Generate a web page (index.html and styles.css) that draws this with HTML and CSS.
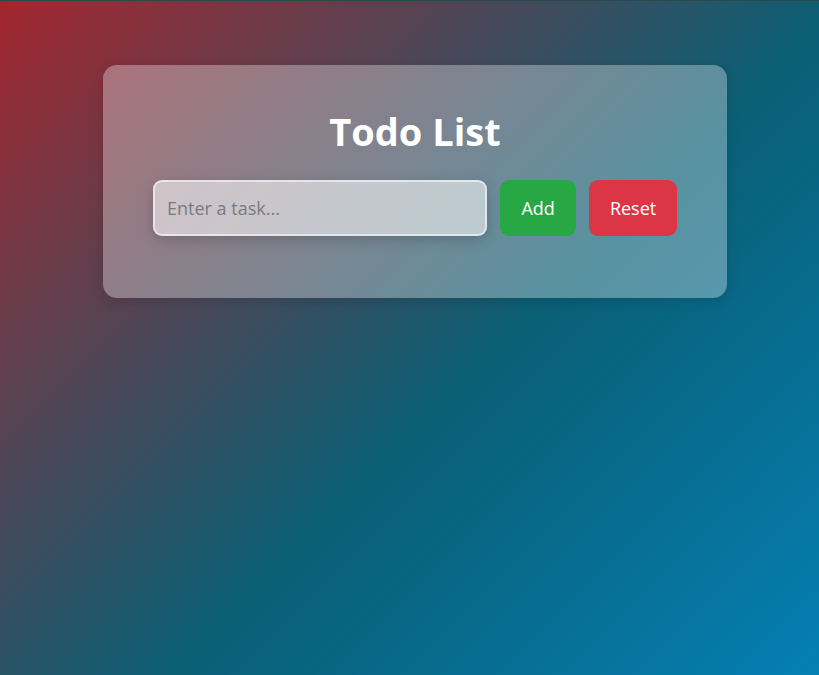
FILE: index.html
```html
<!DOCTYPE html>
<html lang="en">
<head>
<meta charset="utf-8">
<title>Todo List</title>
<link rel="stylesheet" href="styles.css">
</head>
<body>
<div class="topline"></div>
<main class="card">
  <h1 class="title">Todo List</h1>
  <div class="row">
    <input class="task-input" type="text" placeholder="Enter a task...">
    <button class="btn btn-add">Add</button>
    <button class="btn btn-reset">Reset</button>
  </div>
</main>
</body>
</html>
```

FILE: styles.css
```css
html, body {
  margin: 0;
  padding: 0;
  height: 100%;
}
body {
  font-family: "Open Sans", "Noto Sans", sans-serif;
  background: linear-gradient(135deg, #a3262f 0%, #0a5f75 57%, #047fb3 100%);
  overflow: hidden;
}
.topline {
  height: 1px;
  background: #294a4c;
}
.card {
  box-sizing: border-box;
  width: 624px;
  height: 233px;
  margin: 64px 0 0 103px;
  padding: 0 50px;
  border-radius: 14px;
  background: rgba(255, 255, 255, 0.32);
  box-shadow: 0 4px 12px rgba(0, 0, 0, 0.12);
  display: flex;
  flex-direction: column;
  align-items: center;
}
.title {
  margin: 39px 0 0;
  font-size: 38px;
  line-height: 54px;
  font-weight: 700;
  color: #fff;
}
.row {
  margin-top: 22px;
  display: flex;
  gap: 13px;
  width: 100%;
}
.task-input {
  box-sizing: border-box;
  width: 335px;
  height: 56px;
  padding: 0 12px;
  border: 2px solid rgba(255, 255, 255, 0.55);
  border-radius: 9px;
  background: rgba(255, 255, 255, 0.55);
  box-shadow: 0 4px 14px rgba(0, 0, 0, 0.18);
  font-family: inherit;
  font-size: 18px;
  color: #333;
  outline: none;
}
.task-input::placeholder {
  color: #7a7a7e;
}
.btn {
  box-sizing: border-box;
  height: 56px;
  padding: 0 20px;
  border: none;
  border-radius: 9px;
  color: #fff;
  font-family: inherit;
  font-size: 18px;
  cursor: pointer;
}
.btn-add {
  width: 76px;
  background: #28a745;
}
.btn-reset {
  width: 88px;
  background: #dc3545;
}
```
